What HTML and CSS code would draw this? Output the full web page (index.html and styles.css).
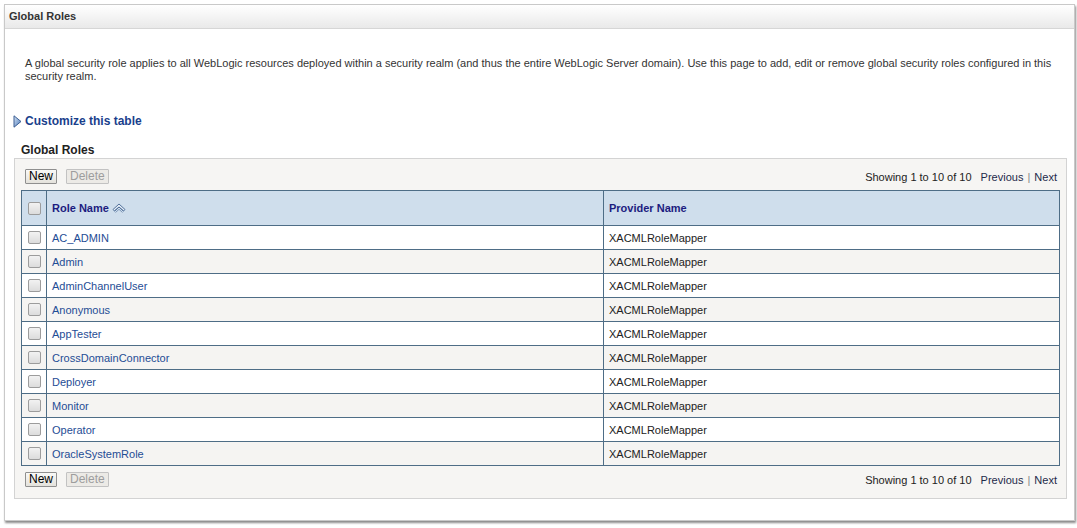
FILE: index.html
```html
<!doctype html>
<html lang="en">

<head>
  <meta charset="UTF-8">
  <title>Global Roles</title>
  <link rel="stylesheet" href="styles.css">
</head>

<body>
  <section class="panel">
    <h1 class="panel-title">Global Roles</h1>
    <div class="panel-body">
      <p class="intro">A global security role applies to all WebLogic resources deployed within a security realm (and thus the entire WebLogic Server domain). Use this page to add, edit or remove global security roles configured in this security realm.</p>

      <a class="customize" href="#">
        <svg width="9" height="13" viewBox="0 0 9 13">
          <defs>
            <linearGradient id="tri" x1="0" y1="0" x2="1" y2="1">
              <stop offset="0" stop-color="#d6e4f5" />
              <stop offset="1" stop-color="#4a78b8" />
            </linearGradient>
          </defs>
          <polygon points="1,0.8 8,6.5 1,12.2" fill="url(#tri)" stroke="#3c5f94" stroke-width="1" stroke-linejoin="round" />
        </svg>
        Customize this table
      </a>

      <h2 class="table-title">Global Roles</h2>
      <div class="table-box">
        <div class="toolbar">
          <div class="buttons">
            <button class="btn">New</button>
            <button class="btn" disabled>Delete</button>
          </div>
          <div class="pager">Showing 1 to 10 of 10 <span class="pager-links">Previous <span class="sep">|</span> Next</span></div>
        </div>

        <table class="roles">
          <thead>
            <tr>
              <th class="col-check"><span class="check"></span></th>
              <th class="col-name">Role Name
                <svg class="sort" width="14" height="10" viewBox="0 0 14 10">
                  <path d="M1 6.5 L7 1 L13 6.5 L11.5 8 L7 4 L2.5 8 Z" fill="#e6eef7" stroke="#50709a" stroke-width="1" stroke-linejoin="round" />
                  <path d="M2.5 8 L7 4 L11.5 8" fill="none" stroke="#50709a" stroke-width="1" />
                  <path d="M3.5 9.5 L7 6.3 L10.5 9.5" fill="none" stroke="#7d97b8" stroke-width="1" />
                </svg>
              </th>
              <th>Provider Name</th>
            </tr>
          </thead>
          <tbody>
            <tr><td class="col-check"><span class="check"></span></td><td><a href="#">AC_ADMIN</a></td><td>XACMLRoleMapper</td></tr>
            <tr><td class="col-check"><span class="check"></span></td><td><a href="#">Admin</a></td><td>XACMLRoleMapper</td></tr>
            <tr><td class="col-check"><span class="check"></span></td><td><a href="#">AdminChannelUser</a></td><td>XACMLRoleMapper</td></tr>
            <tr><td class="col-check"><span class="check"></span></td><td><a href="#">Anonymous</a></td><td>XACMLRoleMapper</td></tr>
            <tr><td class="col-check"><span class="check"></span></td><td><a href="#">AppTester</a></td><td>XACMLRoleMapper</td></tr>
            <tr><td class="col-check"><span class="check"></span></td><td><a href="#">CrossDomainConnector</a></td><td>XACMLRoleMapper</td></tr>
            <tr><td class="col-check"><span class="check"></span></td><td><a href="#">Deployer</a></td><td>XACMLRoleMapper</td></tr>
            <tr><td class="col-check"><span class="check"></span></td><td><a href="#">Monitor</a></td><td>XACMLRoleMapper</td></tr>
            <tr><td class="col-check"><span class="check"></span></td><td><a href="#">Operator</a></td><td>XACMLRoleMapper</td></tr>
            <tr><td class="col-check"><span class="check"></span></td><td><a href="#">OracleSystemRole</a></td><td>XACMLRoleMapper</td></tr>
          </tbody>
        </table>

        <div class="toolbar toolbar-bottom">
          <div class="buttons">
            <button class="btn">New</button>
            <button class="btn" disabled>Delete</button>
          </div>
          <div class="pager">Showing 1 to 10 of 10 <span class="pager-links">Previous <span class="sep">|</span> Next</span></div>
        </div>
      </div>
    </div>
  </section>
</body>
</html>
```

FILE: styles.css
```css
body {
  margin: 0;
  padding: 4px 2px 6px 4px;
  background: #ffffff;
  font-family: "Liberation Sans", Arial, sans-serif;
  font-size: 11px;
  color: #333333;
}

.panel {
  width: 1069px;
  border: 1px solid #c9c9c9;
  box-shadow: 1px 2px 2px #8c8c8c;
  background: #ffffff;
}

.panel-title {
  margin: 0;
  height: 23px;
  line-height: 22px;
  padding-left: 4px;
  font-size: 11px;
  font-weight: bold;
  color: #333333;
  background: linear-gradient(#ffffff, #e9e9e9);
  border-bottom: 1px solid #d6d6d6;
}

.panel-body {
  padding: 28px 7px 21px 9px;
}

.intro {
  margin: 0 0 0 11px;
  line-height: 13px;
  padding-right: 8px;
}

.customize {
  display: flex;
  align-items: center;
  gap: 3px;
  margin: 31px 0 0 -1px;
  font-size: 12px;
  font-weight: bold;
  color: #1a3f8c;
  text-decoration: none;
}

.table-title {
  margin: 15px 0 0 7px;
  height: 15px;
  line-height: 15px;
  font-size: 12px;
  font-weight: bold;
  color: #222222;
}

.table-box {
  border: 1px solid #d3d3d3;
  background: #f6f5f3;
  padding: 10px 6px 11px 6px;
}

.toolbar {
  display: flex;
  justify-content: space-between;
  align-items: center;
  padding-left: 4px;
  padding-right: 3px;
  height: 15px;
}

.toolbar-bottom {
  margin-top: 6px;
}

.buttons {
  display: flex;
  gap: 9px;
}

.btn {
  height: 15px;
  padding: 0 3px;
  font-family: "Liberation Sans", Arial, sans-serif;
  font-size: 12px;
  line-height: 13px;
  color: #000000;
  background: linear-gradient(#f9f9f7, #e4e2dc);
  border: 1px solid #8f8f8f;
  border-radius: 1px;
}

.btn:disabled {
  color: #9d9d9d;
  background: #eceae6;
  border-color: #c2c2c2;
}

.pager {
  color: #222222;
}

.pager-links {
  margin-left: 6px;
  color: #1d2a4a;
}

.sep {
  color: #888888;
  margin: 0 1px;
}

.roles {
  width: 1039px;
  margin-top: 6px;
  border-collapse: collapse;
  border: 1px solid #4e6d86;
  background: #ffffff;
}

.roles th {
  height: 34px;
  padding: 0 5px;
  text-align: left;
  font-weight: bold;
  color: #1c1c80;
  background: #cfdeec;
  border: 1px solid #4e6d86;
}

.roles td {
  height: 23px;
  padding: 0 5px;
  border: 1px solid #4e6d86;
  color: #222222;
}

.roles tbody tr:nth-child(even) td {
  background: #f5f4f2;
}

.roles a {
  color: #1f4d95;
  text-decoration: none;
}

.roles .col-check {
  width: 18px;
  padding: 0 0 0 6px;
}

.roles .col-name {
  width: 546px;
}

.sort {
  vertical-align: -1px;
}

.check {
  display: block;
  width: 11px;
  height: 11px;
  border: 1px solid #9c9c9c;
  border-radius: 2px;
  background: linear-gradient(#f2f2f2, #dcdcdc);
}
```
